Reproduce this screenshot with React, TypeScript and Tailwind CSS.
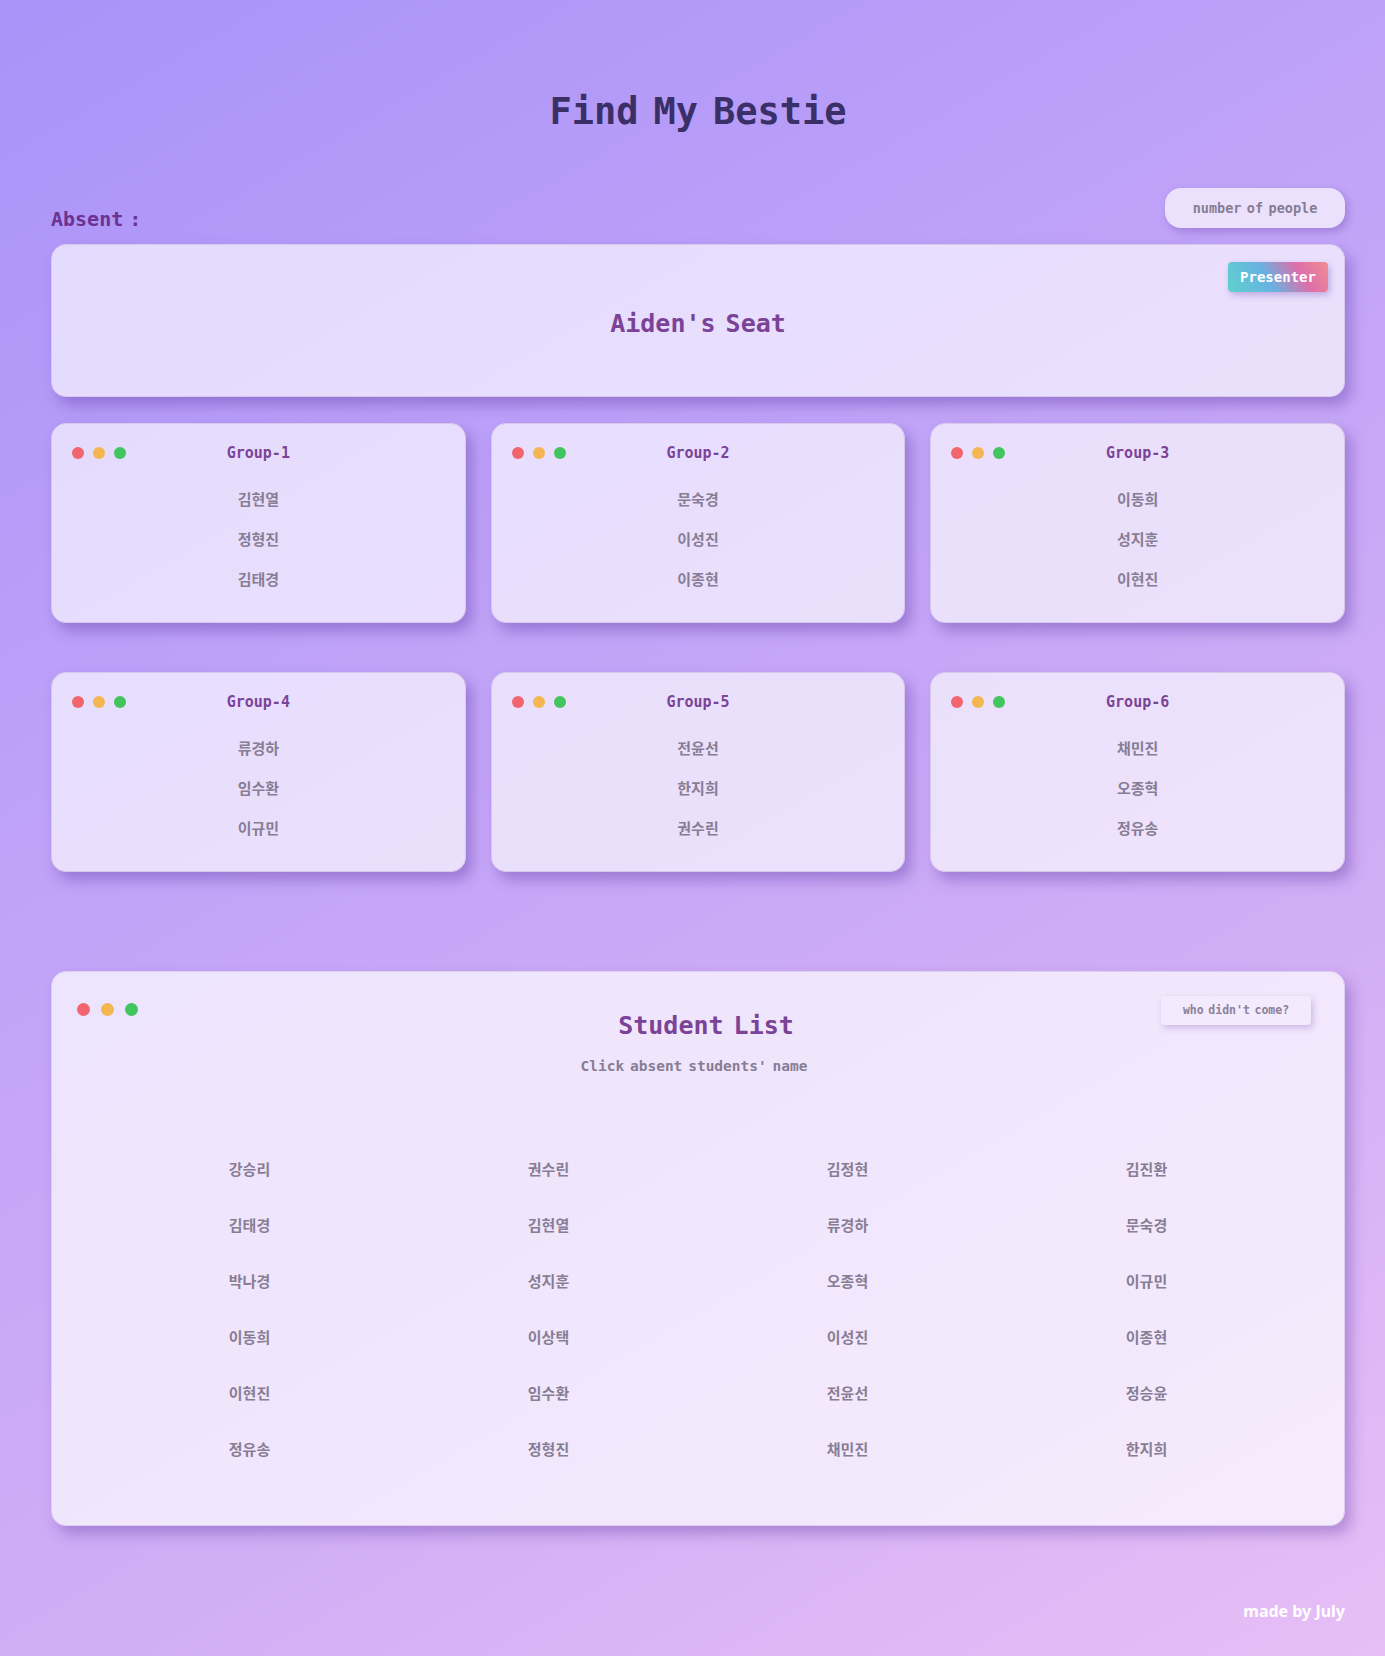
const groups = [
  { title: "Group-1", names: ["김현열", "정형진", "김태경"] },
  { title: "Group-2", names: ["문숙경", "이성진", "이종현"] },
  { title: "Group-3", names: ["이동희", "성지훈", "이현진"] },
  { title: "Group-4", names: ["류경하", "임수환", "이규민"] },
  { title: "Group-5", names: ["전윤선", "한지희", "권수린"] },
  { title: "Group-6", names: ["채민진", "오종혁", "정유송"] },
];

const students = [
  "강승리", "권수린", "김정현", "김진환",
  "김태경", "김현열", "류경하", "문숙경",
  "박나경", "성지훈", "오종혁", "이규민",
  "이동희", "이상택", "이성진", "이종현",
  "이현진", "임수환", "전윤선", "정승윤",
  "정유송", "정형진", "채민진", "한지희",
];

const mono = "font-['DejaVu_Sans_Mono','Noto_Sans_CJK_KR',monospace]";
const kr = "font-['Noto_Sans_CJK_KR',sans-serif]";

function Dots({ size = "w-3 h-3", gap = "gap-[9px]" }: { size?: string; gap?: string }) {
  return (
    <div className={`flex items-center ${gap}`}>
      <span className={`${size} rounded-full bg-[#f2656f]`} />
      <span className={`${size} rounded-full bg-[#f3b651]`} />
      <span className={`${size} rounded-full bg-[#42c45e]`} />
    </div>
  );
}

function GroupCard({ title, names }: { title: string; names: string[] }) {
  return (
    <div className="h-[200px] rounded-[15px] bg-white/65 border border-[#d6c9ec] shadow-[6px_8px_14px_rgba(90,50,160,0.38)] px-[20px] pt-[18px]">
      <div className="grid grid-cols-[1fr_auto_1fr] items-center h-5">
        <Dots />
        <span className={`${mono} text-[15px] font-bold text-[#7b4397]`}>{title}</span>
        <span />
      </div>
      <div className="mt-[17px] flex flex-col items-center">
        {names.map((n) => (
          <div key={n} className={`${kr} h-10 flex items-center text-[15px] font-bold text-[#877d94]`}>
            {n}
          </div>
        ))}
      </div>
    </div>
  );
}

export default function App() {
  return (
    <div className="min-h-[1656px] w-full bg-[linear-gradient(150deg,#a993f8_0%,#bfa2f8_35%,#d2aef5_70%,#e7bff6_100%)] pl-[51px] pr-[40px] pt-[91px] pb-10">
      <h1 className={`${mono} text-center text-[37px] leading-[42px] font-bold text-[#3a2f66] [word-spacing:-0.2em]`}>
        Find My Bestie
      </h1>

      <div className="mt-[55px] flex justify-between items-end h-10">
        <span className={`${mono} text-[20px] leading-6 font-bold text-[#6b3291] mb-[-3px] [word-spacing:-0.3em]`}>Absent :</span>
        <button className={`${mono} w-[180px] h-10 rounded-[16px] bg-[#ece1fc] text-[13.5px] font-bold text-[#867d92] shadow-[3px_4px_8px_rgba(90,50,160,0.3)] [word-spacing:-0.2em]`}>
          number of people
        </button>
      </div>

      <div className="relative mt-4 h-[153px] rounded-[15px] bg-white/65 border border-[#d6c9ec] shadow-[6px_8px_14px_rgba(90,50,160,0.38)] flex items-center justify-center pt-[7px]">
        <span className={`${mono} text-[25px] font-bold text-[#7b4397] [word-spacing:-0.2em]`}>Aiden's Seat</span>
        <span className={`${mono} absolute top-[17px] right-[16px] w-[100px] h-[30px] rounded-[4px] flex items-center justify-center text-[14px] font-bold text-white bg-[linear-gradient(60deg,#5ed2cb_0%,#68b2e2_40%,#e06ea9_72%,#ee8d92_100%)] shadow-[2px_3px_6px_rgba(90,50,160,0.3)]`}>
          Presenter
        </span>
      </div>

      <div className="mt-[26px] grid grid-cols-3 gap-x-[25px] gap-y-[49px]">
        {groups.map((g) => (
          <GroupCard key={g.title} title={g.title} names={g.names} />
        ))}
      </div>

      <div className="mt-[99px] h-[555px] rounded-[15px] bg-white/70 border border-[#dccff0] shadow-[6px_8px_14px_rgba(90,50,160,0.35)]">
        <div className="grid grid-cols-[1fr_auto_1fr] items-start pl-[25px] pr-[33px] pt-6">
          <div className="pt-[7px]">
            <Dots size="w-[13px] h-[13px]" gap="gap-[11px]" />
          </div>
          <div className="flex flex-col items-center">
            <span className={`${mono} mt-[14px] ml-6 text-[25px] leading-8 font-bold text-[#7b4397] [word-spacing:-0.2em]`}>Student List</span>
            <span className={`${mono} mt-[14px] text-[14.5px] leading-5 font-bold text-[#877d94] [word-spacing:-0.2em]`}>Click absent students' name</span>
          </div>
          <div className="flex justify-end">
            <button className={`${mono} w-[150px] h-[29px] rounded-[4px] bg-[#f3eafd] text-[11.5px] font-bold text-[#8a8296] shadow-[2px_3px_6px_rgba(90,50,160,0.25)] [word-spacing:-0.2em]`}>
              who didn't come?
            </button>
          </div>
        </div>
        <div className="mt-[65px] px-12 grid grid-cols-4">
          {students.map((s) => (
            <div key={s} className={`${kr} h-14 flex items-center justify-center text-[15px] font-bold text-[#877d94]`}>
              {s}
            </div>
          ))}
        </div>
      </div>

      <div className="mt-[73px] flex justify-end">
        <span className="font-['Noto_Sans',sans-serif] text-[16px] leading-6 font-bold text-white">made by July</span>
      </div>
    </div>
  );
}
